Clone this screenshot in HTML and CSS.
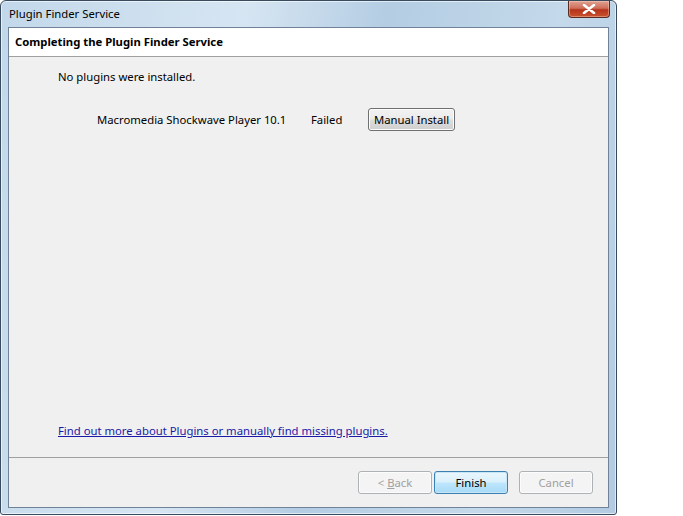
FILE: index.html
```html
<!DOCTYPE html>
<html lang="en">
<head>
    <meta charset="UTF-8">
    <title>Plugin Finder Service</title>
    <link rel="stylesheet" href="styles.css">
</head>
<body>
    <div class="window">
        <div class="titlebar">
            <span class="title">Plugin Finder Service</span>
            <div class="close-btn">
                <svg width="14" height="10" viewBox="0 0 14 10">
                    <path d="M2 1 L12 9 M12 1 L2 9" stroke="#fff" stroke-width="2.6" stroke-linecap="round"/>
                </svg>
            </div>
        </div>

        <div class="client">
            <div class="wizard-header">Completing the Plugin Finder Service</div>

            <div class="wizard-body">
                <p class="summary">No plugins were installed.</p>
                <div class="plugin-row">
                    <span class="plugin-name">Macromedia Shockwave Player 10.1</span>
                    <span class="plugin-status">Failed</span>
                    <button class="btn btn-manual">Manual Install</button>
                </div>
                <div class="spacer"></div>
                <a href="#" class="more-link">Find out more about Plugins or manually find missing plugins.</a>
            </div>

            <div class="wizard-footer">
                <button class="btn btn-disabled">&lt; <u>B</u>ack</button>
                <button class="btn btn-default">Finish</button>
                <button class="btn btn-disabled btn-cancel">Cancel</button>
            </div>
        </div>
    </div>
</body>
</html>
```

FILE: styles.css
```css
* {
    margin: 0;
    padding: 0;
    box-sizing: border-box;
}

body {
    background: #fff;
    font-family: "Noto Sans", "Open Sans", sans-serif;
    font-size: 11.3px;
    color: #000;
}

/* Aero window frame */
.window {
    width: 617px;
    height: 515px;
    display: flex;
    flex-direction: column;
    padding: 0 7px 6px 7px;
    border: 1px solid #394b5f;
    border-radius: 6px 6px 3px 3px;
    background: linear-gradient(100deg, #c2d8ea 0%, #d6e5f2 35%, #b4cde3 55%, #c4d9ea 80%, #b2cbe2 100%);
    box-shadow: inset 0 0 0 1px rgba(255, 255, 255, 0.6);
}

.titlebar {
    height: 26px;
    display: flex;
    align-items: flex-start;
    justify-content: space-between;
}

.title {
    margin-top: 5px;
    padding-left: 1px;
    color: #000;
}

.close-btn {
    width: 42px;
    height: 17px;
    margin-right: -1px;
    display: flex;
    align-items: center;
    justify-content: center;
    border: 1px solid #5a2a24;
    border-top: none;
    border-radius: 0 0 4px 4px;
    background: linear-gradient(#e0a293 0%, #cf6f59 45%, #b5341b 55%, #c9532f 100%);
    box-shadow: inset 0 0 0 1px rgba(255, 220, 200, 0.4);
}

/* Client area */
.client {
    flex: 1;
    display: flex;
    flex-direction: column;
    border: 1px solid #6f8298;
    background: #f0f0f0;
}

.wizard-header {
    height: 29px;
    padding: 6px 0 0 6px;
    background: #fff;
    border-bottom: 1px solid #a0a0a0;
    font-weight: bold;
}

.wizard-body {
    flex: 1;
    display: flex;
    flex-direction: column;
    padding: 11px 0 18px 49px;
}

.summary {
    line-height: 17px;
}

.plugin-row {
    display: flex;
    align-items: center;
    margin-top: 23px;
    padding-left: 39px;
}

.plugin-name {
    width: 214px;
}

.plugin-status {
    width: 57px;
}

.spacer {
    flex: 1;
}

.more-link {
    color: #1a1aa6;
    text-decoration: underline;
    line-height: 17px;
}

/* Buttons */
.btn {
    height: 23px;
    font-family: inherit;
    font-size: 11.3px;
    color: #000;
    border: 1px solid #707070;
    border-radius: 3px;
    background: linear-gradient(#f2f2f2 0%, #ebebeb 48%, #dddddd 52%, #cfcfcf 100%);
    box-shadow: inset 0 0 0 1px #fcfcfc;
}

.btn-manual {
    width: 87px;
}

.wizard-footer {
    height: 50px;
    display: flex;
    align-items: center;
    justify-content: flex-end;
    gap: 2px;
    padding: 0 15px 0 0;
    border-top: 1px solid #a0a0a0;
}

.wizard-footer .btn {
    width: 74px;
}

.btn-disabled {
    color: #a0a0a0;
    border-color: #adb2b5;
    background: #f4f4f4;
}

.btn-default {
    border-color: #3c7fb1;
    background: linear-gradient(#eaf6fd 0%, #d9f0fc 48%, #bee6fd 52%, #a7d9f5 100%);
    box-shadow: inset 0 0 0 1px #c7e7f8;
}

.btn-cancel {
    margin-left: 9px;
}
```
